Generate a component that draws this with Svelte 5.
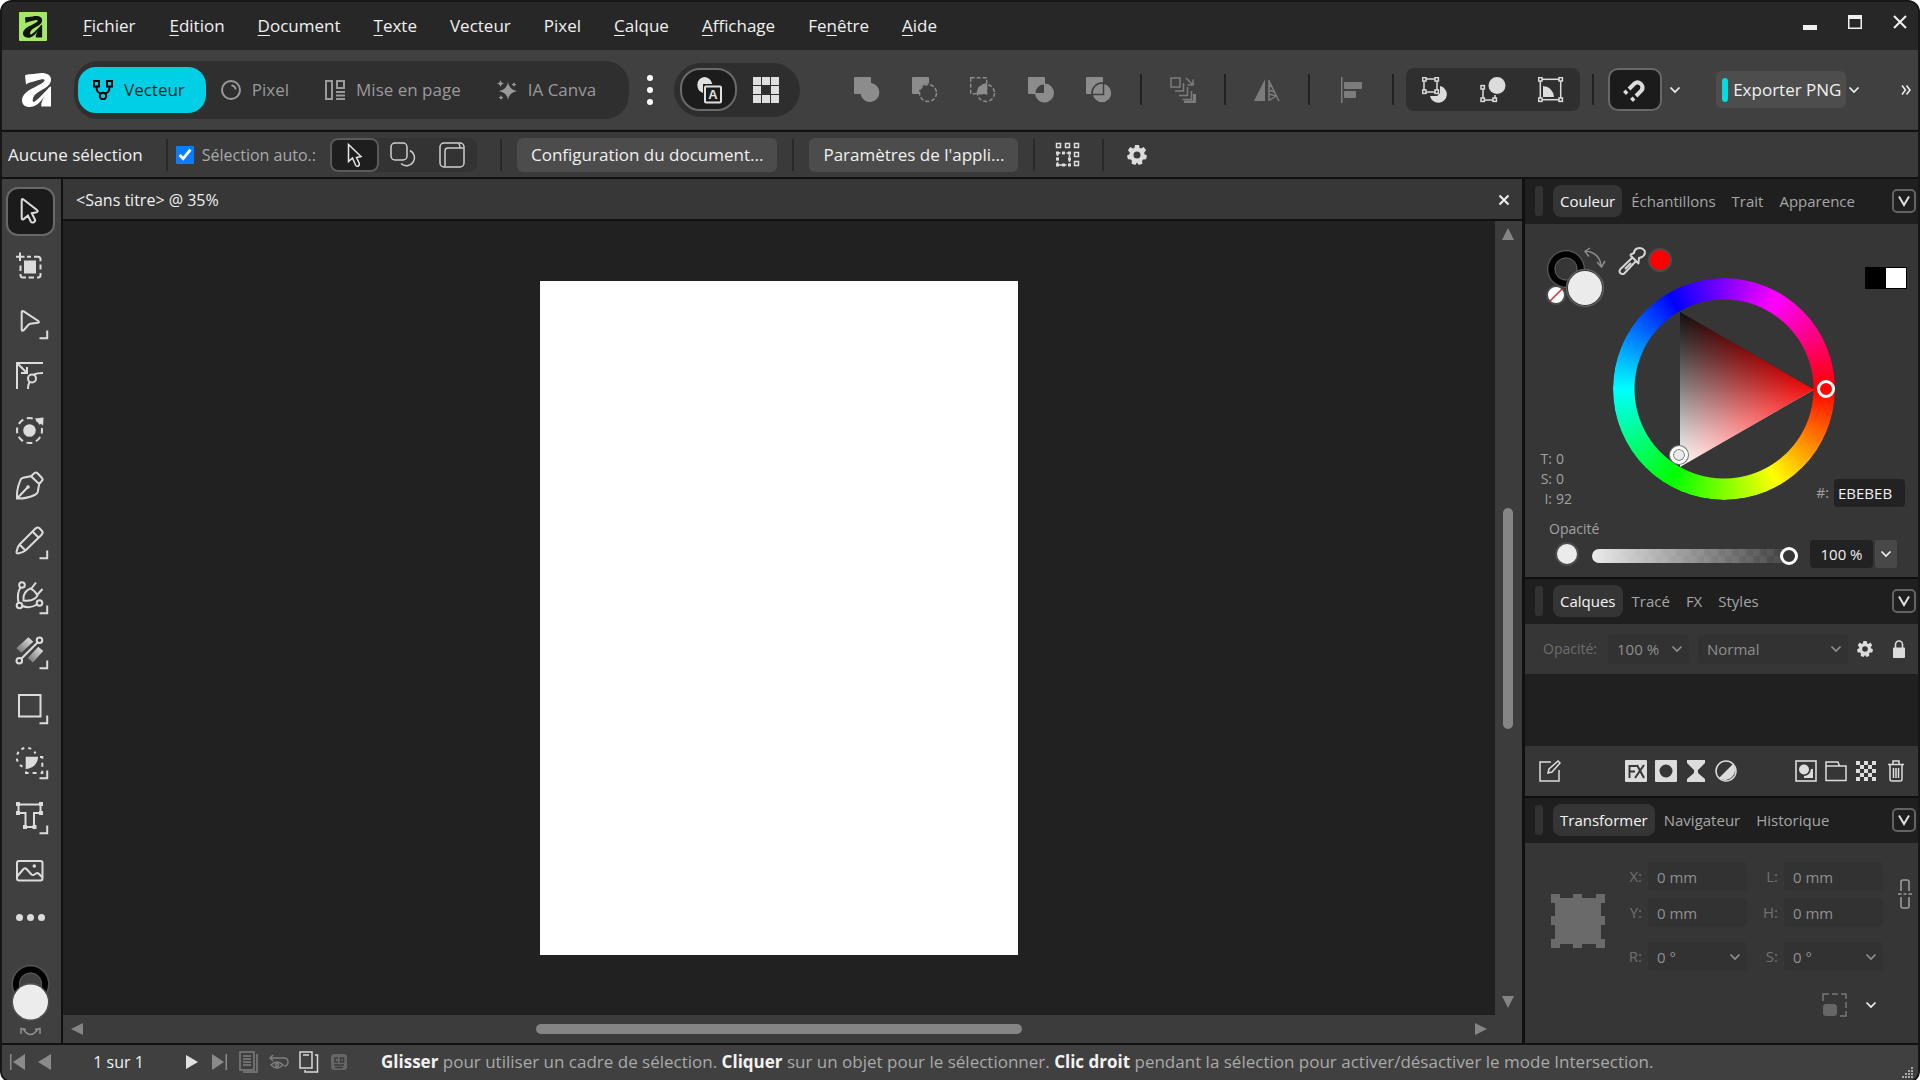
<script>
  const menus = [
    ['F', 'ichier'], ['E', 'dition'], ['D', 'ocument'], ['T', 'exte'], ['', 'Vecteur'], ['', 'Pixel'],
    ['C', 'alque'], ['A', 'ffichage'], ['', 'Fe', 'n', 'être'], ['A', 'ide']
  ];

  const modes = [
    { name: 'Vecteur', icon: '<rect x="1" y="1" width="5" height="5.5"/><rect x="14" y="1" width="5" height="5.5"/><circle cx="10" cy="16" r="3.2"/><path d="M3.5 6.5c0 5 1.5 6 4.3 7.2M16.5 6.5c0 5-1.5 6-4.3 7.2"/>' },
    { name: 'Pixel', icon: '<circle cx="10" cy="10" r="9"/><path d="M10.5 5.5a4 4 0 0 1 4 4"/>' },
    { name: 'Mise en page', icon: '<rect x="1" y="1" width="6" height="18"/><rect x="12" y="1" width="7" height="7"/><path d="M11 12h9M11 15.5h9M11 19h9"/>' },
    { name: 'IA Canva', icon: '<g fill="currentColor" stroke="none"><path d="M11 2q1 7.5 9 9-8 1.5-9 9-1-7.5-9-9 8-1.5 9-9z"/><path d="M3.5 0q.5 3 3.5 3.5-3 .5-3.5 3.5-.5-3-3.5-3.5 3-.5 3.5-3.5zM17 2q.3 2 2.500 2.500-2.200.5-2.500 2.500-.3-2-2.500-2.500 2.200-.5 2.500-2.500zM4 15q.3 2 2.500 2.500-2.200.5-2.500 2.500-.3-2-2.500-2.500 2.200-.5 2.500-2.500z"/></g>' }
  ];

  const booleans = [
    { name: 'Ajouter', icon: '<path fill="currentColor" d="M1 0h15q1 0 1 1v5a9.500 9.500 0 1 1-10.500 11H1q-1 0-1-1V1q0-1 1-1z"/>' },
    { name: 'Soustraire', icon: '<path fill="currentColor" d="M1 0h15q1 0 1 1v5.500a9.500 9.500 0 0 0-10 10.500H1q-1 0-1-1V1q0-1 1-1z"/><circle cx="16" cy="16" r="8.5" stroke="currentColor" stroke-width="1.500" stroke-dasharray="4 2"/>' },
    { name: 'Intersection', icon: '<rect x=".7" y=".7" width="16" height="16" stroke="currentColor" stroke-width="1.500" stroke-dasharray="4 2"/><circle cx="16" cy="16" r="8.5" stroke="currentColor" stroke-width="1.500" stroke-dasharray="4 2"/><path fill="currentColor" d="M17 6v11H6.500Q7.500 7.500 17 6z"/>' },
    { name: 'Exclusion', icon: '<path fill="currentColor" fill-rule="evenodd" d="M1 0h15q1 0 1 1v5.500a9.500 9.500 0 1 1-10 10.500H1q-1 0-1-1V1q0-1 1-1zM16 7.500a8.500 8.500 0 0 0-8.500 8.500h8.500z"/>' },
    { name: 'Diviser', icon: '<path fill="currentColor" d="M1 0h15q1 0 1 1v4.500a11 11 0 0 0-11.500 11.500H1q-1 0-1-1V1q0-1 1-1z"/><circle cx="16" cy="16" r="9.5" fill="currentColor"/><path stroke="#404040" stroke-width="1.500" d="M17.500 5v12.500H5"/><circle cx="16" cy="16" r="10" stroke="#404040" stroke-width="1.500"/>' }
  ];

  const inserts = [
    { name: 'Insérer derrière', icon: '<path fill="currentColor" stroke="none" d="M18 9a8.500 8.500 0 1 1-10 10h7l3-3z"/><rect x="2" y="2" width="13" height="13"/><g fill="#2f2f2f"><rect x=".6" y=".6" width="3.400" height="3.400"/><rect x="13" y=".6" width="3.400" height="3.400"/><rect x=".6" y="13" width="3.400" height="3.400"/><rect x="13" y="13" width="3.400" height="3.400"/></g>' },
    { name: 'Insérer au-dessus', icon: '<path d="M3 10v13h12v-5"/><g fill="#2f2f2f"><rect x="1" y="8.600" width="3.400" height="3.400"/><rect x="1" y="21" width="3.400" height="3.400"/><rect x="13" y="21" width="3.400" height="3.400"/></g><circle cx="17" cy="8.500" r="8.500" fill="currentColor" stroke="none"/>' },
    { name: "Insérer à l'intérieur", icon: '<path fill="currentColor" stroke="none" d="M5 9q10 1 11 11H5z"/><rect x="2.300" y="2.300" width="20.400" height="20.400"/><g fill="#2f2f2f"><rect x=".6" y=".6" width="3.400" height="3.400"/><rect x="21" y=".6" width="3.400" height="3.400"/><rect x=".6" y="21" width="3.400" height="3.400"/><rect x="21" y="21" width="3.400" height="3.400"/></g>' }
  ];

  const tools = [
    { name: 'Déplacement', active: true, icon: '<path d="M15.700 13.500q0-2.200 1.800-1l13.500 10.500q1.700 1.500-.5 2.200l-4.700 1 3.200 6.500q.6 1.700-1.200 2.600-2 .8-3-.8l-2.900-6-4.200 3.600q-2 1.200-2-1z"/>' },
    { name: 'Plan de travail', icon: '<path d="M14 10.500v8.500M10 14.700h8.500"/><path d="M21 14.700h4M28 14.700h4q2.500 0 2.500 2.500v2M34.500 22.500v5M34.500 31v2q0 2.500-2.500 2.500h-1M28 35.500h-5.500M20 35.500h-3q-2.500 0-2.500-2.500v-1M14.500 29v-5.500"/><rect x="18" y="18.500" width="12" height="13" fill="currentColor" stroke="none"/>' },
    { name: 'Nœud', more: true, icon: '<path d="M15.700 15.500q0-2.300 2-1.200l14.600 9.700q1.500 1.500-.5 1.800l-7.500.9q-1 .2-2 1.300l-4.600 5.200q-2 1.500-2-.8z"/>' },
    { name: 'Coin', icon: '<path d="M11 37V11h26M11 11l10 10M21 15v6h-6"/><circle cx="26" cy="26.500" r="4"/><path d="M28 22.500q3-1.500 9-1.500M23.500 30q-1.500 3-1.500 7"/>' },
    { name: 'Contour', icon: '<circle cx="23.500" cy="23.500" r="12.500" stroke-dasharray="6 3.800" stroke-dashoffset="3"/><circle cx="23.500" cy="23.500" r="6.300" fill="currentColor" stroke="none"/><path fill="currentColor" stroke="none" d="M28.500 11.500 37.500 10.500 37 18.500z"/>' },
    { name: 'Plume', icon: '<path d="M11 36.500q-.7-8 3-17.500 1-3 3-3.300l8-1.500 8.200 7.800-1.500 8q-.5 2-3 3-8 3.800-17.700 3.500zM25 14.200l3.500-3.200q1.500-1 3 .3l4.500 4.700q1.200 1.500 0 2.700l-2.800 3.300M11.500 36l10-10.500"/><circle cx="22" cy="25" r="1.800" fill="currentColor" stroke="none"/>' },
    { name: 'Crayon', more: true, icon: '<path d="M13.500 27.500 29.500 11.500q2-2 4-.2l2.300 2.400q1.800 2-.2 4L19.500 33.500q-3 2.300-7.500 3-1.700 0-1.500-1.500.5-4.500 3-7.500zM26.500 14.500l6 6M13.500 27.500l6 6"/>' },
    { name: 'Courbe', more: true, icon: '<circle cx="16" cy="13" r="2.800"/><circle cx="13.500" cy="33.500" r="2.800"/><circle cx="33.500" cy="31" r="2.800"/><path d="M14.500 15.500q-4 6-2 15.300M16.300 34q7.500 3 14.700-1.500M25 17l5-6.500M31 23l5.500-6M17.500 28.500q-.5-6 3-9.500l3.500-2.500q4 1 7.500 7l-2 2.500q-4.500 3.500-12 2.500z"/>' },
    { name: 'Dégradé', more: true, icon: '<g stroke="none"><path fill="url(#bar1)" d="M22.300 10.300l5 4.400-12 11-5-4.500zM32.300 19.700l5 4.400-10.500 11.500-5-4.500z"/></g><path d="M15.500 31.500l16-16"/><circle cx="33.500" cy="13.200" r="2.800"/><circle cx="13.300" cy="33.700" r="2.800"/><defs><linearGradient id="bar1" x1="1" y1="0" x2="0" y2="1"><stop offset=".2" stop-color="#e8e8e8"/><stop offset="1" stop-color="#404040"/></linearGradient></defs>' },
    { name: 'Rectangle', more: true, icon: '<rect x="13" y="13" width="21.500" height="21.500"/>' },
    { name: 'Sélection de forme', more: true, icon: '<path fill="currentColor" stroke="none" d="M19.700 19.700h12.500q-1 11-12.500 12.500z"/><path stroke-dasharray="3 4" d="M16.500 29.500a9.800 9.800 0 1 1 13-13"/><path stroke-dasharray="4 4" d="M34 20h2.300v16H20v-3"/>' },
    { name: 'Texte artistique', more: true, icon: '<path d="M12.500 12.500h22v8.500h-6.500v14h-8.500v-14h-7z"/><g fill="currentColor" stroke="none"><path d="M10 10h4v4h-4zM33 10h4v4h-4zM10 19h4v4h-4zM33 19h4v4h-4zM17 33h4v4h-4zM26.500 33h4v4h-4z"/></g>' },
    { name: 'Image', icon: '<rect x="11" y="14" width="25.500" height="19.500" rx="2"/><path d="M11.500 29l6-7q1.500-1.500 3 0l5 5.500q1.500 1 3 0l1.500-1q1.500-1 3 .5l3.500 3.500"/><circle cx="28.300" cy="19" r="1.800" fill="currentColor" stroke="none"/>' }
  ];

  let mode = $state('Vecteur');
</script>

{#snippet chevron()}
  <svg class="chevron" viewBox="0 0 12 8" width="12" height="8" aria-hidden="true"><path d="M1.500 1.500 6 6l4.500-4.500" /></svg>
{/snippet}

{#snippet gear(size)}
  <svg viewBox="0 0 20 20" width={size} height={size} aria-hidden="true">
    <path fill="currentColor" fill-rule="evenodd" d="M8 0h4l.6 2.900 1.500.7L16.700 2l2.400 3.300-1.900 2.300.3 1.600L20 10.500l-.9 3.800-3 .2-1 1.200.3 3-3.600 1.300L10 17.600 8.200 20l-3.600-1.300.3-3-1-1.200-3-.2L0 10.500l2.500-1.300.3-1.600L.9 5.300 3.300 2l2.600 1.600 1.500-.7zM10 6.500a3.500 3.500 0 1 0 0 7 3.500 3.500 0 0 0 0-7z" />
  </svg>
{/snippet}

{#snippet letterA()}
  <path fill="currentColor" d="M3 2.500C6.500.5 10 1.800 15 .6 22-1 29 .8 29 6.500c0 5-4.500 8-10 11-5 2.800-7.500 5-8.200 8.800-.5 2.800 1 3.400 3 1.500C18.500 24 23 19 27.500 14l1.500-.5v20h-9.500c-1-2 .5-6 3.500-11C18.500 29.500 13.500 34 7.500 34 3 34 0 31.500 0 27.500 0 20.500 7 17 14.500 13.200c5-2.500 8.500-4.500 8-6.200-.5-1.500-4-.8-7.500.5-4.500 1.500-8 1.500-11 4z" />
{/snippet}

{#snippet panelHeader(tabs)}
  <header class="panel-head">
    <span class="grip"></span>
    <div class="tabs" role="tablist">
      {#each tabs as tab, i}
        <button class="tab" class:current={i === 0} role="tab" aria-selected={i === 0}>{tab}</button>
      {/each}
    </div>
    <button class="fold" aria-label="Options du panneau">
      <svg viewBox="0 0 12 12" width="12" height="12"><path d="M1 1.500 6 10l5-8.500" fill="none" stroke="currentColor" stroke-width="2" /></svg>
    </button>
  </header>
{/snippet}

<div class="window">
  <nav class="menubar" aria-label="Menu principal">
    <svg class="app-icon" viewBox="0 0 28 29" width="28" height="29" aria-hidden="true">
      <rect width="28" height="29" rx="1" fill="#a5e869" />
      <g color="#0d1408" transform="translate(4 4) scale(.66 .64)">{@render letterA()}</g>
    </svg>
    <ul class="menus">
      {#each menus as [key, rest, key2 = '', tail = '']}
        <li><button><u>{key}</u>{rest}<u>{key2}</u>{tail}</button></li>
      {/each}
    </ul>
    <div class="window-buttons">
      <button aria-label="Réduire"><svg viewBox="0 0 14 16" width="14" height="16"><path d="M0 11h14v5H0z" fill="currentColor" /></svg></button>
      <button aria-label="Agrandir"><svg viewBox="0 0 14 16" width="14" height="16"><path d="M0 1h14v14H0zM1.500 5v8.500h11V5z" fill="currentColor" fill-rule="evenodd" /></svg></button>
      <button aria-label="Fermer"><svg viewBox="0 0 14 16" width="14" height="16"><path d="M1 2l12 12M13 2 1 14" stroke="currentColor" stroke-width="2" /></svg></button>
    </div>
  </nav>

  <div class="toolbar">
    <svg class="brand" viewBox="0 0 29 34" width="29" height="34" aria-label="Affinity">{@render letterA()}</svg>
    <div class="modes">
      {#each modes as m}
        <button class="mode" class:on={mode === m.name} onclick={() => (mode = m.name)}>
          <svg class="line" viewBox="0 0 20 20" width="20" height="20" aria-hidden="true">{@html m.icon}</svg>
          {m.name}
        </button>
      {/each}
    </div>
    <button class="kebab" aria-label="Plus de studios"><i></i><i></i><i></i></button>
    <div class="view-pill">
      <button class="view-on" aria-label="Aperçu">
        <svg viewBox="0 0 28 28" width="28" height="28">
          <path fill="#e0e0e0" d="M9 1a8.500 8.500 0 0 1 8.300 7H8v9A8.300 8.300 0 0 1 9 1z" />
          <rect x="10" y="10.500" width="16" height="16" rx="1" fill="none" stroke="#e0e0e0" stroke-width="2" />
          <text x="18" y="23" text-anchor="middle">A</text>
        </svg>
      </button>
      <button class="bare" aria-label="Grille">
        <svg viewBox="0 0 26 26" width="26" height="26"><path fill="#e0e0e0" d="M0 0h8v8H0zM9 0h8v8H9zM18 0h8v8h-8zM0 9h8v8H0zM18 9h8v8h-8zM0 18h8v8H0zM9 18h8v8H9zM18 18h8v8h-8z" /></svg>
      </button>
    </div>
    <div class="booleans">
      {#each booleans as b}
        <button class="bare" aria-label={b.name}><svg viewBox="0 0 26 26" width="26" height="26" fill="none">{@html b.icon}</svg></button>
      {/each}
    </div>
    <span class="sep"></span>
    <button class="bare dim" aria-label="Ordre">
      <svg class="thin" viewBox="0 0 26 26" width="26" height="26"><path d="M1 1h9v9H1zM16 1l7 7M23 2.500V8h-5.500M5 14h8.500V6M9 18.500h8.500V10M12.500 22.500h9V14" /><path d="M14 25h10.500V17" stroke-width="3" /></svg>
    </button>
    <span class="sep"></span>
    <button class="bare dim" aria-label="Retourner">
      <svg viewBox="0 0 26 26" width="26" height="26"><path fill="currentColor" d="M11 2v22H0z" /><path stroke="currentColor" stroke-width="1.500" fill="none" d="M15 3v21M15 4l10 20M15 8l2 2M15 13l5 2M15 17l7 2M16 23l6-4" /></svg>
    </button>
    <span class="sep"></span>
    <button class="bare dim" aria-label="Aligner">
      <svg viewBox="0 0 26 26" width="26" height="26"><path fill="currentColor" d="M3 0h1.500v26H3z" /><rect x="6" y="5" width="18" height="7" rx="1" fill="currentColor" /><rect x="6" y="14" width="12" height="7" rx="1" fill="currentColor" /></svg>
    </button>
    <span class="sep close"></span>
    <div class="inserts">
      {#each inserts as b}
        <button class="bare" aria-label={b.name}><svg class="insert" viewBox="0 0 26 26" width="26" height="26">{@html b.icon}</svg></button>
      {/each}
    </div>
    <span class="sep snug"></span>
    <button class="magnet" aria-label="Magnétisme">
      <svg viewBox="0 0 26 26" width="26" height="26" fill="none" stroke="#dcdcdc" stroke-width="4">
        <path d="M7 12l5.500-5.500q3-2.500 6.500.5 3 3.500.5 6.500L14 19" /><path d="M2.500 16.500 5 14M9.500 23.500 12 21" />
      </svg>
    </button>
    <button class="drop" aria-label="Options de magnétisme">{@render chevron()}</button>
    <button class="export"><span class="bar"></span>Exporter PNG</button>
    <button class="drop near" aria-label="Formats d'exportation">{@render chevron()}</button>
    <button class="overflow" aria-label="Plus d'outils"><svg viewBox="0 0 10 12" width="10" height="12"><path d="M1 1.500 4.500 6 1 10.500M5.500 1.500 9 6l-3.500 4.500" fill="none" stroke="currentColor" stroke-width="1.500" /></svg></button>
  </div>

  <div class="context">
    <span class="status-label">Aucune sélection</span>
    <span class="rule"></span>
    <label class="auto"><input type="checkbox" checked />Sélection auto.:</label>
    <div class="pick">
      <button class="pick-on" aria-label="Objet"><svg class="thin" viewBox="0 0 26 26" width="26" height="26"><path d="M7.500 2.500v17l4-3.500 3 7q1 1.800 2.800 1 1.600-1 1-2.500l-2.800-6 4.500-1z" /></svg></button>
      <button aria-label="Groupe"><svg class="thin" viewBox="0 0 26 26" width="26" height="26"><rect x="1" y="1" width="16" height="17" rx="4" /><path d="M20 8.500a8 8 0 1 1-9 13" /></svg></button>
      <button aria-label="Calque"><svg class="thin" viewBox="0 0 26 26" width="26" height="26"><rect x="1" y="1" width="24" height="24" rx="4" /><path d="M6 24.500V9q0-3 3-3h15.500" /><path d="M19.500 1.500q1.500 1 1.500 4.500" /></svg></button>
    </div>
    <span class="rule mid"></span>
    <button class="flat">Configuration du document...</button>
    <span class="rule even"></span>
    <button class="flat">Paramètres de l'appli...</button>
    <span class="rule even"></span>
    <button class="bare lit" aria-label="Transformer les objets séparément">
      <svg viewBox="0 0 26 26" width="26" height="26" fill="none" stroke="currentColor" stroke-width="1.500">
        <path d="M1.500 1.500h4v4h-4zM10.500 1.500h4v4h-4zM19.500 1.500h4v4h-4zM19.500 10.500h4v4h-4zM19.500 19.500h4v4h-4z" /><rect x="2.500" y="11" width="12" height="12" stroke-dasharray="3 1.500" />
        <path fill="currentColor" stroke="none" d="M1 9.500h3v3H1zM7 9.500h3v3H7zM13 9.500h3v3h-3zM1 15.500h3v3H1zM13 15.500h3v3h-3zM1 21.500h3v3H1zM7 21.500h3v3H7zM13 21.500h3v3h-3z" />
      </svg>
    </button>
    <span class="rule wide"></span>
    <button class="bare lit" aria-label="Préférences">{@render gear(20)}</button>
  </div>

  <main class="work">
    <aside class="tools" aria-label="Outils">
      {#each tools as t}
        <button class="tool" class:chosen={t.active} aria-label={t.name}>
          <svg viewBox="0 0 49 49" width="49" height="49">{@html t.icon}{#if t.more}<path d="M33.500 41.300h7.700v-7.800" />{/if}</svg>
        </button>
      {/each}
      <button class="tool dots" aria-label="Autres outils"><i></i><i></i><i></i></button>
      <button class="paint" aria-label="Contour et remplissage">
        <svg viewBox="0 0 49 76" width="49" height="76" fill="none">
          <circle cx="24.500" cy="21" r="18.500" stroke="#5c5c5c" /><circle cx="24.500" cy="21" r="14.500" stroke="#000" stroke-width="6" /><circle cx="24.500" cy="21" r="11" stroke="#5c5c5c" />
          <circle cx="24.500" cy="39" r="18.500" fill="#404040" stroke="#555" /><circle cx="24.500" cy="39" r="17.500" fill="#ececec" />
          <path d="M17 66q7.500 11 15 0M15 71v-5.500l5 1M34 71v-5.500l-5 1" stroke="#8e8e8e" stroke-width="1.500" />
        </svg>
      </button>
    </aside>

    <section class="document">
      <header class="doc-tab"><span>&lt;Sans titre&gt; @ 35%</span>
        <button aria-label="Fermer le document"><svg viewBox="0 0 12 12" width="12" height="12"><path d="M1.500 1.500l9 9M10.500 1.500l-9 9" stroke="currentColor" stroke-width="2" /></svg></button>
      </header>
      <div class="canvas"><div class="page"></div></div>
      <div class="vscroll">
        <svg viewBox="0 0 12 12" width="12" height="12"><path d="M6 0l6 12H0z" /></svg>
        <div class="vtrack"><span class="thumb"></span></div>
        <svg viewBox="0 0 12 12" width="12" height="12"><path d="M6 12 12 0H0z" /></svg>
      </div>
      <div class="hscroll">
        <svg viewBox="0 0 12 12" width="12" height="12"><path d="M0 6 12 0v12z" /></svg>
        <div class="htrack"><span class="thumb"></span></div>
        <svg viewBox="0 0 12 12" width="12" height="12"><path d="M12 6 0 0v12z" /></svg>
      </div>
    </section>

    <aside class="panels">
      <section class="panel">
        {@render panelHeader(['Couleur', 'Échantillons', 'Trait', 'Apparence'])}
        <div class="color-body">
          <div class="color-grid">
            <div class="color-left">
              <svg viewBox="0 0 62 62" width="62" height="62" fill="none" aria-hidden="true">
                <circle cx="20" cy="22" r="18.500" stroke="#5c5c5c" /><circle cx="20" cy="22" r="14.500" stroke="#000" stroke-width="6" /><circle cx="20" cy="22" r="11" stroke="#5c5c5c" />
                <circle cx="39" cy="41" r="18.500" fill="#363636" stroke="#5c5c5c" stroke-width="1.500" /><circle cx="39" cy="41" r="17" fill="#ebebeb" />
                <circle cx="10" cy="48" r="9" fill="#fff" stroke="#4c4c4c" stroke-width="2" /><path d="M4 54 16 42" stroke="#e0202a" stroke-width="1.500" />
                <path d="M40 4q14 2 15 15M44 1l-5 3.500 4 5M51 15l4.500 5 3.500-6" stroke="#8c8c8c" stroke-width="1.500" />
              </svg>
              <dl class="tsi"><dt>T:</dt><dd>0</dd><dt>S:</dt><dd>0</dd><dt>I:</dt><dd>92</dd></dl>
            </div>
            <div class="color-mid">
              <div class="picker">
                <svg viewBox="0 0 28 28" width="28" height="28" fill="none" stroke="#d6d6d6" stroke-width="2" aria-hidden="true"><path d="M15 10 2.500 22q-2 2.500 0 4.300 1.800 1.500 4 0L18.500 13.500M12 8l4-2q0-3 3-4.500 5-1.500 7.500 2 1.500 4-2.500 6.500l-3 1-.5 5M12 8l9 9M7 22l6-6" /></svg>
                <span class="picked"></span>
              </div>
              <div class="wheel">
                <div class="ring"></div>
                <div class="triangle"></div>
                <span class="hue-mark"></span>
                <span class="tone-mark"></span>
              </div>
            </div>
            <div class="color-right">
              <div class="mono"><span></span><span></span></div>
              <label class="hex">#:<input type="text" value="EBEBEB" /></label>
            </div>
          </div>
          <label class="op-label" for="fill-opacity">Opacité</label>
          <div class="op-row">
            <span class="op-dot"></span>
            <input id="fill-opacity" type="range" min="0" max="100" value="100" />
            <input class="op-value" type="text" value="100 %" aria-label="Valeur d'opacité" />
            <button class="op-drop" aria-label="Choisir l'opacité">{@render chevron()}</button>
          </div>
        </div>
      </section>

      <section class="panel">
        {@render panelHeader(['Calques', 'Tracé', 'FX', 'Styles'])}
        <div class="layer-opts">
          <label for="layer-op">Opacité:</label>
          <span class="pick-box op"><select id="layer-op"><option>100 %</option></select>{@render chevron()}</span>
          <span class="pick-box blend"><select aria-label="Mode de fusion"><option>Normal</option></select>{@render chevron()}</span>
          <button class="bare lit" aria-label="Plages de fusion">{@render gear(16)}</button>
          <button class="bare lit lock" aria-label="Verrouiller"><svg viewBox="0 0 12 18" width="12" height="18"><rect y="7.500" width="12" height="10.500" rx="1" fill="currentColor" /><path d="M2.500 8V4.500a3.500 3.500 0 0 1 7 0V8" fill="none" stroke="currentColor" stroke-width="1.600" /></svg></button>
        </div>
        <div class="layer-list"></div>
        <div class="layer-bar">
          <button class="bare lit" aria-label="Modifier"><svg class="thin" viewBox="0 0 22 22" width="22" height="22"><path d="M12 2H1v19h19V10M9 13l1-4 9-8 2 2-8 9z" /></svg></button>
          <div class="layer-mid">
            <button class="bare lit" aria-label="Effets"><svg viewBox="0 0 22 22" width="22" height="22"><rect width="22" height="22" rx="1" fill="currentColor" /><path d="M4.500 18V6h7M4.500 11.500H10M10 18l9-13M12 5l7 13" fill="none" stroke="#363636" stroke-width="2" /></svg></button>
            <button class="bare lit" aria-label="Masque"><svg viewBox="0 0 22 22" width="22" height="22"><path fill="currentColor" fill-rule="evenodd" d="M1 0h20q1 0 1 1v20q0 1-1 1H1q-1 0-1-1V1q0-1 1-1zM11 4.500a6.500 6.500 0 1 0 0 13 6.500 6.500 0 0 0 0-13z" /></svg></button>
            <button class="bare lit" aria-label="Filtre dynamique"><svg viewBox="0 0 22 22" width="22" height="22"><path fill="currentColor" d="M2 0h18v3l-7 7v3l7 6v3H2v-3l7-6v-3L2 3z" /></svg></button>
            <button class="bare lit" aria-label="Réglage"><svg viewBox="0 0 22 22" width="22" height="22"><circle cx="11" cy="11" r="10" fill="none" stroke="currentColor" stroke-width="1.500" /><path fill="currentColor" d="M18 4a10 10 0 0 1-14 14z" /></svg></button>
          </div>
          <div class="layer-end">
            <button class="bare lit" aria-label="Nouveau calque"><svg viewBox="0 0 22 22" width="22" height="22"><rect x="1" y="1" width="20" height="20" fill="none" stroke="currentColor" stroke-width="1.600" /><circle cx="9" cy="9.500" r="5" fill="currentColor" /><path fill="currentColor" d="M16 9h2v9H9v-2q6 0 7-7z" /></svg></button>
            <button class="bare lit" aria-label="Groupe"><svg class="thin" viewBox="0 0 22 22" width="22" height="22"><path d="M1 20.500V2h12l1.500 4H21v14.500zM1 6h13.500" /></svg></button>
            <button class="bare lit" aria-label="Calque de pixels"><svg viewBox="0 0 22 22" width="22" height="22"><path fill="currentColor" d="M1 1h4v4H1zM9 1h4v4H9zM17 1h4v4h-4zM5 5h4v4H5zM13 5h4v4h-4zM1 9h4v4H1zM9 9h4v4H9zM17 9h4v4h-4zM5 13h4v4H5zM13 13h4v4h-4zM1 17h4v4H1zM9 17h4v4H9zM17 17h4v4h-4z" /></svg></button>
            <button class="bare lit" aria-label="Supprimer"><svg class="thin" viewBox="0 0 22 22" width="22" height="22"><path d="M3 4.500h16M8 4V1h6v3M5 5v14q0 2 2 2h8q2 0 2-2V5M8.500 8v10M11 8v10M13.500 8v10" /></svg></button>
          </div>
        </div>
      </section>

      <section class="panel last">
        {@render panelHeader(['Transformer', 'Navigateur', 'Historique'])}
        <div class="transform">
          <svg class="anchor" viewBox="0 0 54 54" width="54" height="54" aria-label="Point d'ancrage"><path fill="#6a6a6a" d="M0 0h9v4h13V0h9v4h14V0h9v9h-4v13h4v9h-4v14h4v9h-9v-4H31v4h-9v-4H9v4H0v-9h4V31H0v-9h4V9H0z" /></svg>
          <div class="fields">
            <label for="tx">X:</label><input id="tx" type="text" value="0 mm" />
            <label for="tl">L:</label><input id="tl" type="text" value="0 mm" />
            <label for="ty">Y:</label><input id="ty" type="text" value="0 mm" />
            <label for="th">H:</label><input id="th" type="text" value="0 mm" />
            <label class="angle" for="tr">R:</label><span class="pick-box angle"><select id="tr"><option>0 °</option></select>{@render chevron()}</span>
            <label class="angle" for="ts">S:</label><span class="pick-box angle"><select id="ts"><option>0 °</option></select>{@render chevron()}</span>
            <div class="scale">
              <svg viewBox="0 0 26 24" width="26" height="24" aria-hidden="true"><path d="M1 8V1h6M10 1h6M19 1h5v5M24 9v6M24 18v5h-6" fill="none" stroke="#777" stroke-width="1.500" /><rect x="1" y="11" width="14" height="12" rx="3" fill="#666" /></svg>
              <button class="scale-drop" aria-label="Options d'échelle">{@render chevron()}</button>
            </div>
          </div>
          <button class="link" aria-label="Lier les dimensions"><svg viewBox="0 0 14 30" width="14" height="30"><path d="M3 12V3q0-2 2-2h4q2 0 2 2v9M3 18v9q0 2 2 2h4q2 0 2-2v-9M0 15h3.500M5.500 15h3M10.500 15H14" fill="none" stroke="currentColor" stroke-width="1.600" /></svg></button>
        </div>
      </section>
    </aside>
  </main>

  <footer class="status">
    <div class="pager">
      <button aria-label="Première page"><svg viewBox="0 0 16 16" width="16" height="16"><path d="M0 0h1.500v16H0zM15 0v16L3 8z" fill="currentColor" /></svg></button>
      <button aria-label="Page précédente"><svg viewBox="0 0 16 16" width="16" height="16"><path d="M14 0v16L1 8z" fill="currentColor" /></svg></button>
      <span class="count">1 sur 1</span>
      <button class="bright" aria-label="Page suivante"><svg viewBox="0 0 16 16" width="16" height="16"><path d="M2 1v14l12-7z" fill="currentColor" /></svg></button>
      <button aria-label="Dernière page"><svg viewBox="0 0 16 16" width="16" height="16"><path d="M1 0v16l12-8zM14.500 0H16v16h-1.500z" fill="currentColor" /></svg></button>
    </div>
    <div class="status-icons">
      <svg viewBox="0 0 20 22" width="20" height="22"><path d="M1 1h14v18H1zM4 5h8M4 8h8M4 11h8M4 14h8M18 3v18H4" /></svg>
      <svg viewBox="0 0 20 22" width="20" height="22"><path d="M1 7h14q4 0 4 4t-4 4M4 4 1 7l3 3" /><path d="M2 14q6-6 12 0-6 6-12 0z" /><circle cx="8" cy="14" r="1.500" /></svg>
      <svg class="bright" viewBox="0 0 20 22" width="20" height="22"><path d="M1 1h12v16H1zM4 4h6M16 4h2.500v17H6v-2" /></svg>
      <svg viewBox="0 0 20 22" width="20" height="22"><rect x="2" y="3" width="16" height="16" rx="3" fill="#666" stroke="none" /><path stroke="#3c3c3c" d="M9 7H6v4h3M11.500 7h3v4h-3zM5 14h10M6 16.500h8" /></svg>
    </div>
    <p><b>Glisser</b> pour utiliser un cadre de sélection. <b>Cliquer</b> sur un objet pour le sélectionner. <b>Clic droit</b> pendant la sélection pour activer/désactiver le mode Intersection.</p>
    <svg class="resize" viewBox="0 0 12 12" width="12" height="12"><path d="M9 0h2v2H9zM6 3h2v2H6zM9 3h2v2H9zM3 6h2v2H3zM6 6h2v2H6zM9 6h2v2H9zM0 9h2v2H0zM3 9h2v2H3zM6 9h2v2H6zM9 9h2v2H9z" fill="#a8a8a8" /></svg>
  </footer>
</div>

<style>
  :global(body) { margin: 0; background: #fff; }
  :global(*) { box-sizing: border-box; }
  .window {
    display: flex; flex-direction: column; min-height: 100vh; overflow: hidden;
    border: 2px solid #161616; border-radius: 12px; background: #404040;
    font: 17px/24px 'Open Sans', 'Noto Sans', sans-serif; color: #f0f0f0;
  }
  button, input, select { font: inherit; color: inherit; margin: 0; padding: 0; border: 0; background: none; border-radius: 0; }
  button { display: flex; align-items: center; justify-content: center; white-space: nowrap; }
  svg { display: block; flex: none; }
  .line, .thin, .insert { fill: none; stroke: currentColor; stroke-width: 2; }
  .thin { stroke-width: 1.5; }
  .insert { stroke-width: 1.5; color: #dcdcdc; }
  .chevron { fill: none; stroke: currentColor; stroke-width: 1.7; }
  .bare { flex: none; }
  .dim { color: #7c7c7c; }
  .lit { color: #dcdcdc; }

  .menubar { display: flex; align-items: center; height: 48px; padding: 0 11px 0 17px; background: #272727; }
  .menus { display: flex; list-style: none; margin: 0; padding: 0 0 0 19px; }
  .menus button { padding: 0 16px 0 17px; white-space: pre; }
  .menus li:first-child button { padding-right: 17px; }
  .menus u { text-underline-offset: 3px; }
  .window-buttons { display: flex; gap: 31px; margin: 0 0 8px auto; }

  .toolbar { display: flex; align-items: center; height: 80px; padding: 0 7px 0 20px; border-bottom: 1px solid #383838; background: #404040; }
  .brand { color: #fff; margin-right: 23px; }
  .modes { display: flex; align-items: center; height: 58px; padding: 0 12px 0 4px; border-radius: 24px; background: #2f2f2f; }
  .mode { gap: 11px; height: 46px; padding: 0 21px 0 15px; border-radius: 18px; color: #9a9a9a; }
  .mode.on { background: #00cfe6; color: #06272c; }
  .mode.on svg { color: #000; }
  .kebab { flex-direction: column; gap: 6px; width: 16px; margin: 0 16px 0 13px; }
  .kebab i { width: 6px; height: 6px; border-radius: 50%; background: #fff; }
  .view-pill { display: flex; align-items: center; gap: 16px; width: 126px; height: 54px; padding-left: 6px; border-radius: 27px; background: #2e2e2e; }
  .view-on { width: 57px; height: 43px; border: 2px solid #6a6a6a; border-radius: 20px; background: #1c1c1c; }
  .view-on text { font: bold 13px 'Liberation Sans', sans-serif; fill: #e0e0e0; }
  .booleans { display: flex; gap: 32px; margin-left: 54px; color: #8c8c8c; }
  .sep { width: 2px; height: 31px; margin: 0 28px; background: #222; flex: none; }
  .sep.close { margin-right: 12px; }
  .sep.snug { margin: 0 14px 0 12px; }
  .inserts { display: flex; align-items: center; gap: 32px; height: 43px; padding: 0 16px; border-radius: 8px; background: #2f2f2f; }
  .magnet { width: 54px; height: 43px; border: 2px solid #686868; border-radius: 10px; background: #1b1b1b; }
  .drop { margin-left: 7px; }
  .drop.near { margin-left: 2px; }
  .export { height: 37px; margin-left: 35px; padding: 0 5px 0 6px; gap: 5px; border-radius: 6px; background: #4d4d4d; }
  .bar { width: 6px; height: 24px; border-radius: 3px; background: #00dbe2; }
  .overflow { margin-left: auto; }

  .context { display: flex; align-items: center; height: 49px; padding: 1px 0 0 6px; border: solid #111; border-width: 2px 0; background: #3a3a3a; }
  .rule { width: 2px; height: 32px; margin: 0 8px 0 23px; background: #292929; flex: none; }
  .rule.mid { margin-right: 15px; }
  .rule.even { margin: 0 15px; }
  .rule.even + .bare { margin-left: 5px; }
  .rule.wide { margin: 0 23px 0 21px; }
  .auto { display: flex; align-items: center; gap: 8px; font-size: 16px; color: #a9a9a9; white-space: nowrap; }
  .auto input { width: 18px; height: 18px; accent-color: #0a7cff; }
  .pick { display: flex; height: 34px; margin-left: 14px; border-radius: 8px; background: #333; color: #cfcfcf; }
  .pick button { width: 49px; }
  .pick .pick-on { border: 2px solid #5a5a5a; border-radius: 8px; background: #1e1e1e; color: #e8e8e8; }
  .flat { height: 34px; padding: 0 14px; border-radius: 6px; background: #4c4c4c; }

  .work { display: flex; flex: 1; background: #101010; }
  .tools { display: flex; flex-direction: column; gap: 6px; width: 59px; padding: 8px 4px 0; background: #404040; flex: none; }
  .tool { width: 49px; height: 49px; color: #dcdcdc; flex: none; }
  .tool svg { fill: none; stroke: currentColor; stroke-width: 2; }
  .chosen { border: 2px solid #686868; border-radius: 12px; background: #1b1b1b; }
  .dots { height: 31px; gap: 4px; }
  .dots i { width: 7px; height: 7px; border-radius: 50%; background: #dcdcdc; }
  .paint { margin: 24px 0 4px; width: 49px; }

  .document { display: grid; grid-template: 42px 1fr 28px / 1fr 27px; flex: 1; margin: 0 3px 0 2px; min-width: 0; }
  .doc-tab { grid-column: 1 / 3; display: flex; align-items: center; justify-content: space-between; padding: 1px 12px 0 13px; border-bottom: 2px solid #111; background: #373737; font-size: 16px; }
  .canvas { display: flex; align-items: center; justify-content: center; background: #212121; }
  .page { height: 85%; aspect-ratio: 477 / 674; background: #fff; }
  .vscroll { grid-row: 2 / 4; grid-column: 2; display: flex; flex-direction: column; align-items: center; padding: 7px 2px 35px 0; background: #3c3c3c; }
  .hscroll { display: flex; align-items: center; padding: 0 8px; background: #3c3c3c; }
  .vscroll svg, .hscroll svg { fill: #858585; }
  .vtrack { display: grid; grid-template-rows: 268fr 221fr 267fr; flex: 1; width: 10px; }
  .vtrack .thumb { grid-row: 2; }
  .htrack { display: grid; grid-template-columns: 454fr 486fr 454fr; flex: 1; height: 10px; }
  .htrack .thumb { grid-column: 2; }
  .thumb { border-radius: 5px; background: #858585; }

  .panels { display: flex; flex-direction: column; width: 393px; flex: none; font-size: 15px; }
  .panel { border-bottom: 2px solid #0e0e0e; background: #363636; }
  .panel.last { flex: 1; border: 0; }
  .panel-head { display: flex; align-items: center; height: 45px; padding: 0 2px 2px 10px; background: #1f1f1f; }
  .grip { width: 8px; height: 30px; border-radius: 3px; background: #323232; }
  .tabs { display: flex; gap: 2px; margin: 0 auto 0 10px; }
  .tab { height: 32px; padding: 0 7px; border-radius: 8px; color: #a6a6a6; }
  .tab.current { background: #353535; color: #f5f5f5; }
  .fold { width: 24px; height: 24px; border: 2px solid #636363; border-radius: 5px; color: #e0e0e0; }

  .color-body { height: 353px; }
  .color-grid { display: grid; grid-template-columns: 88px 222px minmax(0, 1fr); height: 289px; padding-right: 11px; }
  .color-left { display: flex; flex-direction: column; justify-content: space-between; padding: 23px 0 4px 21px; }
  .tsi { display: grid; grid-template-columns: 12px auto; column-gap: 4px; justify-content: start; margin: 0 0 0 -6px; line-height: 20px; color: #a2a2a2; font-size: 14px; }
  .tsi dt { text-align: right; }
  .tsi dd { margin: 0; }
  .picker { display: flex; align-items: center; gap: 2px; height: 54px; padding: 19px 0 0 5px; }
  .picked { width: 24px; height: 24px; border: 2px solid #4c4c4c; border-radius: 50%; background: #f00; margin-bottom: 2px; }
  .wheel { position: relative; width: 222px; height: 222px; }
  .ring { height: 100%; border-radius: 50%; background: conic-gradient(from 90deg, red, yellow, lime, cyan, blue, magenta, red); mask: radial-gradient(circle, transparent 89px, #000 90px); }
  .triangle {
    position: absolute; left: 67px; top: 34px; width: 134px; height: 155px; clip-path: polygon(0 0, 100% 50%, 0 100%);
    background: linear-gradient(90deg, rgb(240 20 20 / 0), #f80c0c), conic-gradient(from 240deg at 100% 50%, #fff 0deg, #858585 30deg, #111 60deg, #111 120deg, #fff);
  }
  .hue-mark { position: absolute; right: 0; top: 102px; width: 18px; height: 18px; border: 3px solid #fff; border-radius: 50%; }
  .tone-mark { position: absolute; left: 57px; top: 168px; width: 18px; height: 18px; border: 3px solid #fff; border-radius: 50%; background: #ebebeb; box-shadow: inset 0 0 0 1px #777, 0 0 0 1px #777; }
  .color-right { display: flex; flex-direction: column; justify-content: space-between; align-items: flex-end; padding: 43px 0 6px; }
  .mono { display: flex; border: 1px solid #000; background: #000; }
  .mono span { width: 20px; height: 20px; background: #000; }
  .mono span + span { background: #fff; }
  .hex { display: flex; align-items: center; gap: 5px; margin-right: 2px; color: #a2a2a2; font-size: 14px; }
  .hex input { width: 71px; height: 28px; padding-left: 4px; border-radius: 4px; background: #222; color: #f0f0f0; font-size: 15px; }
  .op-label { display: block; margin: 4px 0 0 24px; color: #a2a2a2; font-size: 14px; }
  .op-row { display: flex; align-items: center; height: 28px; margin: -1px 21px 0 30px; }
  .op-dot { width: 24px; height: 24px; border: 2px solid #4c4c4c; border-radius: 50%; background: #ebebeb; }
  .op-row input[type='range'] { flex: 1; min-width: 0; height: 14px; margin: 3px 12px 0 13px; appearance: none; border-radius: 7px; background: linear-gradient(90deg, #ebebeb, rgb(54 54 54 / 0) 97%), repeating-conic-gradient(#454545 0 25%, #3a3a3a 0 50%) 0 0 / 14px 14px; }
  .op-row input[type='range']::-webkit-slider-thumb { appearance: none; width: 18px; height: 18px; border: 3px solid #fff; border-radius: 50%; background: #363636; }
  .op-value { width: 63px; height: 28px; border-radius: 4px; background: #222; text-align: center; }
  .op-drop { width: 22px; height: 28px; margin-left: 2px; border-radius: 3px; background: #484848; }

  .layer-opts { display: flex; align-items: center; height: 50px; padding: 0 13px 0 18px; color: #6d6d6d; }
  .layer-opts label { font-size: 14px; }
  .pick-box { display: grid; align-items: center; border-radius: 4px; background: #323232; color: #8f8f8f; }
  .pick-box select { grid-area: 1 / 1; appearance: none; height: 29px; padding-left: 9px; }
  .pick-box .chevron { grid-area: 1 / 1; justify-self: end; margin-right: 6px; pointer-events: none; }
  .op { width: 81px; margin: 0 9px 0 auto; }
  .blend { width: 150px; margin-right: 9px; }
  .lock { margin-left: 20px; }
  .layer-list { height: 72px; background: #202020; }
  .layer-bar { display: flex; align-items: center; height: 50px; padding: 0 11px 1px 14px; }
  .layer-mid { display: flex; gap: 8px; margin-left: 64px; }
  .layer-end { display: flex; gap: 8px; margin-left: auto; }

  .transform { display: flex; padding: 19px 6px 0 26px; }
  .anchor { margin-top: 32px; }
  .fields { display: grid; grid-template-columns: 37px 99px 37px 99px; row-gap: 7px; margin-left: 6px; color: #8f8f8f; }
  .fields label { padding-right: 6px; line-height: 29px; text-align: right; color: #707070; }
  .fields input { width: 99px; height: 29px; padding-left: 9px; border-radius: 4px; background: #323232; }
  .angle { margin-top: 8px; }
  .scale { grid-column: 1 / -1; display: flex; align-items: center; justify-content: flex-end; gap: 17px; margin: 15px 6px 0 0; }
  .scale-drop { color: #f0f0f0; }
  .link { align-self: flex-start; margin: 17px 0 0 auto; color: #9a9a9a; }

  .status { display: flex; align-items: center; height: 38px; padding: 0 4px 2px 8px; border-top: 2px solid #111; background: #404040; color: #a9a9a9; }
  .status p { margin: 0 auto 0 32px; white-space: nowrap; }
  .status b { color: #f2f2f2; }
  .pager { display: flex; align-items: center; color: #8a8a8a; }
  .pager button + button { margin-left: 11px; }
  .count { width: 131px; text-align: center; color: #f0f0f0; font-size: 16px; }
  .bright { color: #e0e0e0; }
  .status-icons { display: flex; gap: 10px; margin-left: 12px; }
  .status-icons svg { fill: none; stroke: #7d7d7d; stroke-width: 1.5; }
  .status-icons .bright { stroke: #d8d8d8; }
  .resize { align-self: flex-end; }
</style>
